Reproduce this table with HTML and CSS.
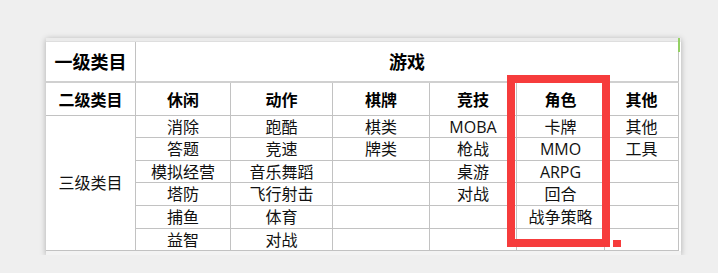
FILE: index.html
```html
<!DOCTYPE html>
<html lang="zh-CN">
<head>
<meta charset="utf-8">
<title>游戏类目</title>
<link rel="stylesheet" href="styles.css">
</head>
<body>
<div class="sheet">
  <div class="grid">
    <div class="c h1">一级类目</div>
    <div class="c h1 wide">游戏</div>

    <div class="c h2">二级类目</div>
    <div class="c h2">休闲</div>
    <div class="c h2">动作</div>
    <div class="c h2">棋牌</div>
    <div class="c h2">竞技</div>
    <div class="c h2">角色</div>
    <div class="c h2">其他</div>

    <div class="c side">三级类目</div>
    <div class="c">消除</div><div class="c">跑酷</div><div class="c">棋类</div><div class="c">MOBA</div><div class="c">卡牌</div><div class="c">其他</div>
    <div class="c">答题</div><div class="c">竞速</div><div class="c">牌类</div><div class="c">枪战</div><div class="c">MMO</div><div class="c">工具</div>
    <div class="c">模拟经营</div><div class="c">音乐舞蹈</div><div class="c"></div><div class="c">桌游</div><div class="c">ARPG</div><div class="c"></div>
    <div class="c">塔防</div><div class="c">飞行射击</div><div class="c"></div><div class="c">对战</div><div class="c">回合</div><div class="c"></div>
    <div class="c">捕鱼</div><div class="c">体育</div><div class="c"></div><div class="c"></div><div class="c">战争策略</div><div class="c"></div>
    <div class="c">益智</div><div class="c">对战</div><div class="c"></div><div class="c"></div><div class="c"></div><div class="c"></div>
  </div>
  <div class="mark"></div>
  <div class="mark-dot"></div>
  <div class="scroll-tick"></div>
</div>
</body>
</html>
```
FILE: styles.css
```css
html, body {
  margin: 0;
  padding: 0;
  background: #efefef;
}

body {
  font-family: "Open Sans", "Noto Sans CJK SC", sans-serif;
  color: #111;
}

.sheet {
  position: relative;
  margin: 38px 0 0 46px;
  width: 635px;
  background: #fff;
  border-top: 4px solid #ebebeb;
  border-bottom: 4px solid #f3f3f3;
  box-shadow: 0 1px 6px rgba(0, 0, 0, 0.28);
}

.grid {
  display: grid;
  grid-template-columns: 90px 95px 102px 97px 87px 88px 74px;
  grid-template-rows: 41px 33px 22px 23px 22px 23px 23px 22px;
  width: 633px;
  border-top: 1px solid #dedede;
  margin-top: -1px;
}

.c {
  box-sizing: border-box;
  display: flex;
  align-items: center;
  justify-content: center;
  border-right: 1px solid #c2c2c2;
  border-bottom: 1px solid #c2c2c2;
  font-size: 16px;
  line-height: 1;
  white-space: nowrap;
}

.h1 {
  font-size: 18px;
  font-weight: 700;
  color: #000;
  border-bottom: 2px solid #d0d0d0;
}

.wide {
  grid-column: 2 / span 6;
}

.h2 {
  font-weight: 700;
  color: #000;
  padding-top: 1px;
}

.side {
  grid-row: 3 / span 6;
}

/* red highlight box round the 角色 column */
.mark {
  position: absolute;
  left: 461px;
  top: 33px;
  width: 103px;
  height: 172px;
  box-sizing: border-box;
  border: 8px solid #f63c3c;
}

.mark-dot {
  position: absolute;
  left: 567px;
  top: 198px;
  width: 8px;
  height: 7px;
  background: #f63c3c;
}

.scroll-tick {
  position: absolute;
  left: 632px;
  top: -4px;
  width: 2px;
  height: 14px;
  background: #94d064;
}
```
